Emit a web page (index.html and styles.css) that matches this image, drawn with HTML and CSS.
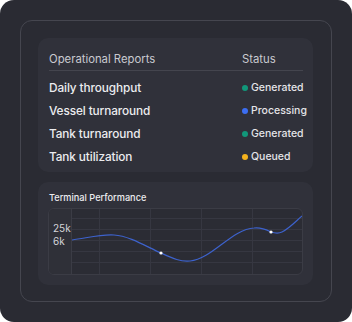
FILE: index.html
```html
<!DOCTYPE html>
<html lang="en">
  <head>
    <meta charset="UTF-8" />
    <meta name="viewport" content="width=device-width, initial-scale=1.0" />
    <title>Operational Reports</title>
    <link rel="stylesheet" href="styles.css">
  </head>
  <body>
    <div class="panel">
      <div class="frame">
        <div class="card reports">
          <div class="reports-head">
            <div>Operational Reports</div>
            <div>Status</div>
          </div>
          <div class="report-row">
            <div class="report-name">Daily throughput</div>
            <div class="status"><span class="dot green"></span>Generated</div>
          </div>
          <div class="report-row">
            <div class="report-name">Vessel turnaround</div>
            <div class="status"><span class="dot blue"></span>Processing</div>
          </div>
          <div class="report-row">
            <div class="report-name">Tank turnaround</div>
            <div class="status"><span class="dot green"></span>Generated</div>
          </div>
          <div class="report-row">
            <div class="report-name">Tank utilization</div>
            <div class="status"><span class="dot yellow"></span>Queued</div>
          </div>
        </div>

        <div class="card performance">
          <div class="card-title">Terminal Performance</div>
          <div class="chart">
            <div class="axis">
              <div>25k</div>
              <div>6k</div>
            </div>
            <svg class="plot" viewBox="0 0 230 65" preserveAspectRatio="none" xmlns="http://www.w3.org/2000/svg">
              <g stroke="#363741" stroke-width="1">
                <line x1="27.5" y1="0" x2="27.5" y2="65" />
                <line x1="78.5" y1="0" x2="78.5" y2="65" />
                <line x1="129.5" y1="0" x2="129.5" y2="65" />
                <line x1="180.5" y1="0" x2="180.5" y2="65" />
                <line x1="0" y1="9.5" x2="230" y2="9.5" />
                <line x1="0" y1="20.5" x2="230" y2="20.5" />
                <line x1="0" y1="31.5" x2="230" y2="31.5" />
                <line x1="0" y1="42.5" x2="230" y2="42.5" />
                <line x1="0" y1="53.5" x2="230" y2="53.5" />
              </g>
              <path
                d="M0 31 C 15 29, 30 25, 42 26 C 58 27, 75 38, 89 44 C 100 49, 108 53, 118 52 C 140 50, 160 20, 182 19 C 190 18, 195 21, 199 23 C 202 24, 206 25, 210 23 C 218 19, 224 12, 230 7"
                fill="none"
                stroke="#3d62cc"
                stroke-width="1.2"
              />
              <circle cx="89" cy="44" r="1.6" fill="#fff" />
              <circle cx="199" cy="23" r="1.6" fill="#fff" />
            </svg>
          </div>
        </div>
      </div>
    </div>
  </body>
</html>
```

FILE: styles.css
```css
body {
  margin: 0;
  background-color: #fff;
  font-family: "Inter", "Noto Sans", sans-serif;
}

.panel {
  width: 352px;
  height: 322px;
  box-sizing: border-box;
  padding: 20px;
  border-radius: 14px;
  background-color: #2a2b33;
}

.frame {
  height: 100%;
  box-sizing: border-box;
  border: 1px solid #45464f;
  border-radius: 12px;
  padding: 17px 18px 17px 17px;
  display: flex;
  flex-direction: column;
  gap: 10px;
}

.card {
  background-color: #30313a;
  border-radius: 10px;
}

.reports {
  padding: 14px 10px 4px 11px;
}

.reports-head {
  display: grid;
  grid-template-columns: 1fr 61px;
  font-size: 11.3px;
  line-height: 14px;
  color: #c9cad0;
  padding-bottom: 4px;
  border-bottom: 1px solid #44454e;
  margin-bottom: 5px;
}

.report-row {
  display: grid;
  grid-template-columns: 1fr 61px;
  align-items: center;
  height: 23px;
}

.report-name {
  font-size: 11.8px;
  font-weight: 500;
  letter-spacing: -0.1px;
  color: #ececef;
}

.status {
  display: flex;
  align-items: center;
  gap: 3px;
  font-size: 10.5px;
  font-weight: 500;
  color: #e4e4e8;
  white-space: nowrap;
}

.dot {
  width: 6px;
  height: 6px;
  border-radius: 50%;
  flex-shrink: 0;
}

.green {
  background-color: #11977a;
}

.blue {
  background-color: #3c6ef2;
}

.yellow {
  background-color: #f4b21d;
}

.performance {
  padding: 10px 10px 10px 10px;
}

.card-title {
  font-size: 9.2px;
  font-weight: 500;
  line-height: 12px;
  color: #ececef;
  padding-left: 1px;
  margin-bottom: 4px;
}

.chart {
  display: flex;
  height: 67px;
  box-sizing: border-box;
  border: 1px solid #3b3c45;
  border-radius: 6px;
  overflow: hidden;
  background-color: #2b2c34;
}

.axis {
  width: 23px;
  border-right: 1px solid #3b3c45;
  background-color: #2f3038;
  padding: 13px 0 0 4px;
  box-sizing: border-box;
  font-size: 10px;
  line-height: 13px;
  color: #d4d4d8;
  flex-shrink: 0;
  overflow: visible;
  white-space: nowrap;
}

.plot {
  flex: 1;
  height: 100%;
  display: block;
}
```
